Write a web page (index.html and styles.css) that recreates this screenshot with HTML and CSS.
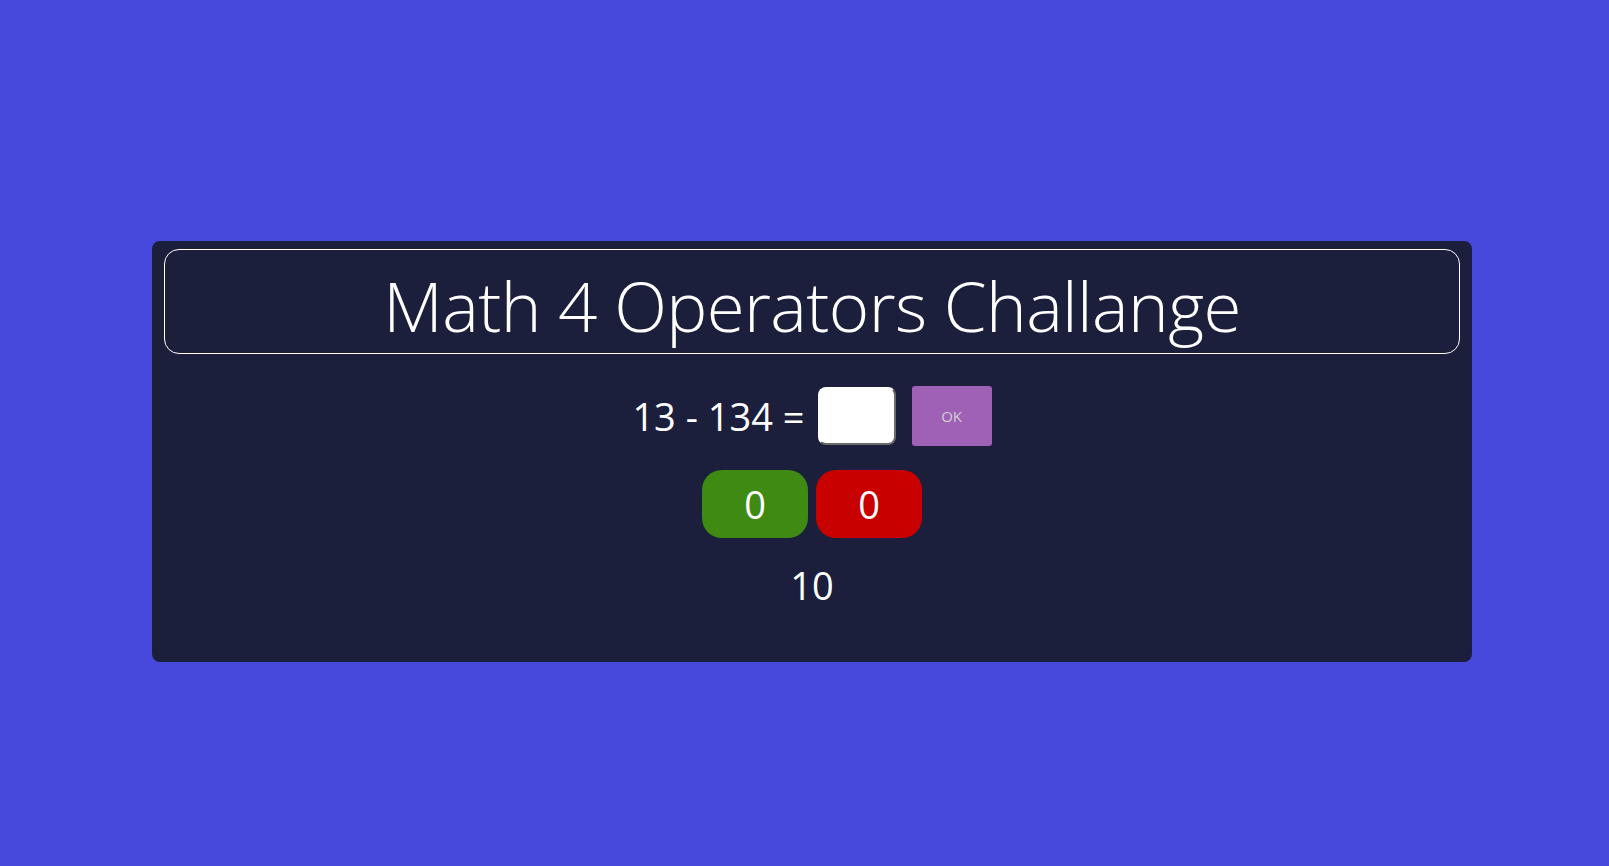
FILE: index.html
```html
<!DOCTYPE html>
<html>
<head>
<meta charset="utf-8">
<title>Math 4 Operators Challange</title>
<link rel="stylesheet" href="styles.css">
</head>
<body>
<div class="page">
  <div class="card">
    <div class="title-box">
      <h1 class="title">Math 4 Operators Challange</h1>
    </div>
    <div class="question-row">
      <span class="question">13 - 134 =</span>
      <input class="answer" type="text">
      <button class="ok-btn">OK</button>
    </div>
    <div class="score-row">
      <div class="score score-right">0</div>
      <div class="score score-wrong">0</div>
    </div>
    <div class="timer">10</div>
  </div>
</div>
</body>
</html>
```

FILE: styles.css
```css
html, body {
  margin: 0;
  padding: 0;
  height: 100%;
}
body {
  background: #4749dc;
  font-family: "Open Sans", "Noto Sans", sans-serif;
  color: #ffffff;
}
.page {
  padding-top: 241px;
  padding-left: 152px;
}
.card {
  width: 1320px;
  box-sizing: border-box;
  background: #1c1f3c;
  border-radius: 8px;
  padding: 8px 12px 57px 12px;
  display: flex;
  flex-direction: column;
  align-items: center;
}
.title-box {
  align-self: stretch;
  height: 105px;
  box-sizing: border-box;
  border: 1px solid #ffffff;
  border-radius: 15px;
  padding-top: 6px;
  display: flex;
  align-items: center;
  justify-content: center;
}
.title {
  margin: 0;
  font-weight: 300;
  font-size: 69px;
  line-height: 80px;
  letter-spacing: -0.6px;
}
.question-row {
  margin-top: 32px;
  height: 60px;
  display: flex;
  align-items: center;
}
.question {
  font-size: 38px;
  line-height: 60px;
}
.answer {
  margin: 0 0 0 13px;
  width: 78px;
  height: 58px;
  box-sizing: border-box;
  border: 2px solid #ffffff;
  border-right-color: #6b6b6b;
  border-bottom-color: #6b6b6b;
  border-radius: 8px;
  background: #ffffff;
  padding: 0;
}
.ok-btn {
  margin-left: 16px;
  width: 80px;
  height: 60px;
  border: none;
  border-radius: 3px;
  background: #9e61b5;
  color: #cfcfcf;
  font-family: "Open Sans", "Noto Sans", sans-serif;
  font-size: 15px;
  padding: 0;
}
.score-row {
  margin-top: 24px;
  display: flex;
  gap: 8px;
}
.score {
  width: 106px;
  height: 68px;
  border-radius: 20px;
  display: flex;
  align-items: center;
  justify-content: center;
  font-size: 38px;
}
.score-right {
  background: #3e8a13;
}
.score-wrong {
  background: #c80000;
}
.timer {
  margin-top: 27px;
  font-size: 38px;
  line-height: 40px;
}
```
